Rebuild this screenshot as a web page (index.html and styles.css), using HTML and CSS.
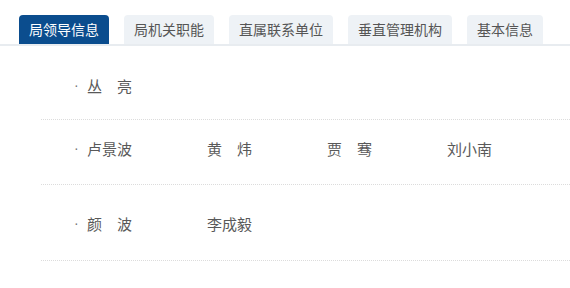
FILE: index.html
```html
<!DOCTYPE html>
<html>
<head>
<meta charset="utf-8">
<link rel="stylesheet" href="styles.css">
</head>
<body>
<div class="tabs">
    <div class="tab active">局领导信息</div>
    <div class="tab">局机关职能</div>
    <div class="tab">直属联系单位</div>
    <div class="tab">垂直管理机构</div>
    <div class="tab">基本信息</div>
</div>

<div class="leaders">
    <div class="row row1">
        <span class="dot">·</span>
        <span class="name">丛　亮</span>
    </div>
    <div class="row row2">
        <span class="dot">·</span>
        <span class="name">卢景波</span>
        <span class="name">黄　炜</span>
        <span class="name">贾　骞</span>
        <span class="name">刘小南</span>
    </div>
    <div class="row row3">
        <span class="dot">·</span>
        <span class="name">颜　波</span>
        <span class="name">李成毅</span>
    </div>
</div>
</body>
</html>
```

FILE: styles.css
```css
body {
    margin: 0;
    font-family: "Noto Sans CJK SC", "Noto Sans", sans-serif;
    background: white;
}
.tabs {
    display: flex;
    gap: 15px;
    padding: 15px 0 0 19px;
    border-bottom: 2px solid #e8ecf0;
}
.tab {
    height: 29px;
    line-height: 29px;
    padding: 0 10px;
    font-size: 14px;
    color: #555;
    background: #eef2f6;
    border-radius: 4px 4px 0 0;
}
.tab.active {
    background: #0b4d8e;
    color: white;
}
.leaders {
    margin-left: 41px;
}
.row {
    display: flex;
    align-items: center;
    height: 20px;
    padding-left: 33px;
    border-bottom: 1px dotted #dcdcdc;
    font-size: 15px;
    color: #595959;
}
.row1 {
    padding-top: 29px;
    padding-bottom: 24px;
}
.row2 {
    padding-top: 18px;
    padding-bottom: 26px;
}
.row3 {
    padding-top: 28px;
    padding-bottom: 27px;
}
.dot {
    width: 13px;
    font-family: "Liberation Sans", sans-serif;
    font-size: 14px;
    color: #777;
}
.name {
    width: 120px;
}
```
